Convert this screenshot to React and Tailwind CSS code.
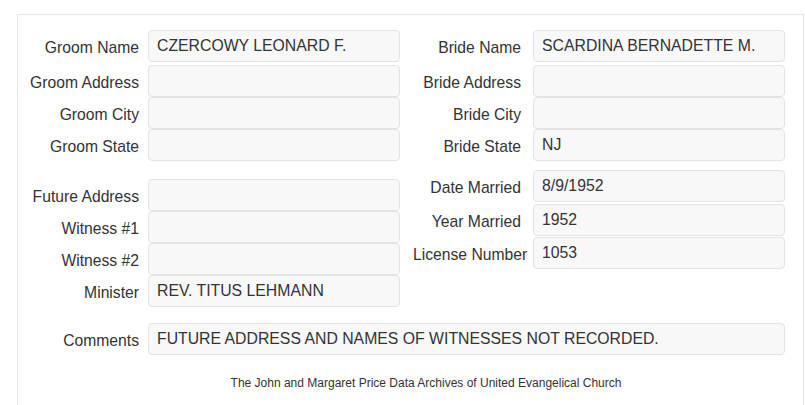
const font = { fontFamily: '"Liberation Sans", Arial, sans-serif' };

function Field({ label, value, top, labelW = "w-[110px]", gap = "gap-[9px]" }) {
  return (
    <div className={`flex items-center ${gap}`} style={{ marginTop: top }}>
      <div className={`${labelW} shrink-0 text-right whitespace-nowrap pt-[3px] text-[15.7px] text-[#333]`}>
        {label}
      </div>
      <div className="h-[32px] w-[252px] shrink-0 rounded-[4px] border border-[#e3e3e3] bg-[#f8f8f8] px-[8px] text-[15.8px] leading-[30px] text-[#333] whitespace-nowrap">
        {value}
      </div>
    </div>
  );
}

function Column({ rows, side }) {
  const labelW = side === "left" ? "w-[110px]" : "w-[108px]";
  const gap = side === "left" ? "gap-[9px]" : "gap-[12px]";
  return (
    <div className="flex flex-col">
      {rows.map((r) => (
        <Field key={r[0]} label={r[0]} value={r[1]} top={r[2]} labelW={labelW} gap={gap} />
      ))}
    </div>
  );
}

export default function App() {
  const groom = [
    ["Groom Name", "CZERCOWY LEONARD F.", 0],
    ["Groom Address", "", 3],
    ["Groom City", "", 0],
    ["Groom State", "", 0],
  ];
  const bride = [
    ["Bride Name", "SCARDINA BERNADETTE M.", 0],
    ["Bride Address", "", 3],
    ["Bride City", "", 0],
    ["Bride State", "NJ", 0],
  ];
  const left2 = [
    ["Future Address", "", 0],
    ["Witness #1", "", 0],
    ["Witness #2", "", 0],
    ["Minister", "REV. TITUS LEHMANN", 0],
  ];
  const right2 = [
    ["Date Married", "8/9/1952", 0],
    ["Year Married", "1952", 2],
    ["License Number", "1053", 1],
  ];

  return (
    <div className="h-[405px] overflow-hidden bg-white" style={font}>
      <div className="ml-[17px] mt-[14px] h-[420px] w-[787px] border border-[#e5e5e5] pl-[11px] pt-[15px]">
        <div className="flex gap-[13px]">
          <Column rows={groom} side="left" />
          <Column rows={bride} side="right" />
        </div>
        <div className="flex gap-[13px]">
          <div className="mt-[18px]">
            <Column rows={left2} side="left" />
          </div>
          <div className="mt-[9px]">
            <Column rows={right2} side="right" />
          </div>
        </div>
        <div className="mt-[16px] flex items-center gap-[9px]">
          <div className="w-[110px] shrink-0 text-right pt-[3px] text-[15.7px] text-[#333]">Comments</div>
          <div className="h-[32px] w-[637px] shrink-0 rounded-[4px] border border-[#e3e3e3] bg-[#f8f8f8] px-[8px] text-[15.8px] leading-[30px] text-[#333] whitespace-nowrap">
            FUTURE ADDRESS AND NAMES OF WITNESSES NOT RECORDED.
          </div>
        </div>
        <div className="mt-[19px] pl-[20px] text-center text-[12px] text-[#333]">
          The John and Margaret Price Data Archives of United Evangelical Church
        </div>
      </div>
    </div>
  );
}
